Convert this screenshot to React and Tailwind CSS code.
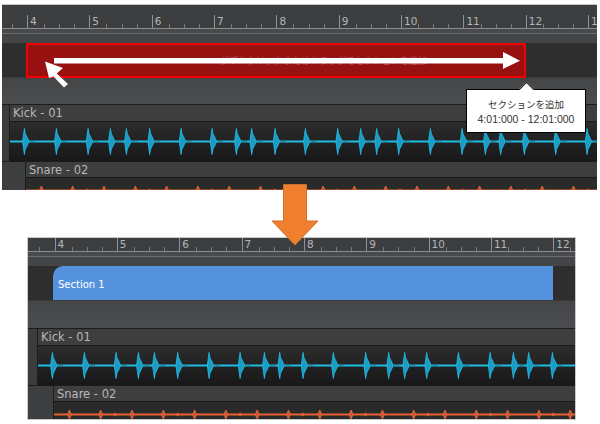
const BARS = [3, 4, 5, 6, 7, 8, 9, 10, 11, 12, 13];
const KICK_HITS = [14.6, 46.6, 78.3, 100.6, 116.6, 139.9, 171.3, 202.3, 226.6, 241.9, 265.3, 295.6, 327.9, 350.9, 366.9, 388.9, 420.6, 452.3, 475.6, 490.9, 514.6, 545.9, 577.3];
const SNARE_HITS = Array.from({ length: 19 }, (_, i) => 15.4 + i * 31.3);
const SNARE_GHOSTS = Array.from({ length: 9 }, (_, i) => 61 + i * 62.6);

function kickPath(x, c) {
  return `M${x - 2} ${c} L${x - 1.2} ${c - 6} L${x - 0.2} ${c - 13} L${x + 0.6} ${c - 8} L${x + 2.8} ${c - 3.5} L${x + 4.4} ${c} L${x + 2.8} ${c + 3.5} L${x + 0.6} ${c + 8} L${x - 0.2} ${c + 13} L${x - 1.2} ${c + 6} Z`;
}

function snarePath(x, c, h) {
  return `M${x - 2} ${c} L${x} ${c - h} L${x + 2} ${c} L${x} ${c + h} Z`;
}

function Ruler({ height, offset, bars }) {
  return (
    <div className={`flex items-end overflow-hidden shrink-0 bg-[#3c3e40] border-b border-[#8a8c8e] ${height}`}>
      <div className={`flex shrink-0 h-[13px] items-end ${offset}`}>
        {bars.map((bar) => (
          <div key={bar} className="flex items-end shrink-0 w-[62.35px] h-full">
            <div className="flex-1 h-full border-l border-[#8f9193] pl-[2px] text-[10.5px] leading-[12px] text-[#b4b6b8] whitespace-nowrap">
              {bar > 3 ? bar : ''}
            </div>
            <div className="flex-1 h-[4px] border-l border-[#77797b]"></div>
            <div className="flex-1 h-[4px] border-l border-[#77797b]"></div>
            <div className="flex-1 h-[4px] border-l border-[#77797b]"></div>
          </div>
        ))}
      </div>
    </div>
  );
}

function KickTrack({ gutter }) {
  const c = 19.5;
  return (
    <div className="flex shrink-0 bg-[#333537] border-t border-[#1c1c1c]">
      <div className={`${gutter} shrink-0 bg-[#3a3c3e] border-r border-[#1c1c1c]`}></div>
      <div className="flex-1 min-w-0">
        <div className="h-[17px] bg-[#3e3e3e] pt-[1px] pl-[3px] text-[11.5px] leading-[15px] text-[#b8b8b8] border-b border-[#1a1a1a]">Kick - 01</div>
        <div className="h-[39px] bg-gradient-to-b from-[#2c2c2c] to-[#181818] overflow-hidden">
          <svg width="600" height="39" className="block">
            <line x1="0" y1={c} x2="600" y2={c} stroke="#20bce4" strokeWidth="1.8" />
            {KICK_HITS.map((x) => (
              <g key={x}>
                <path d={kickPath(x, c)} fill="#1a9cc4" stroke="#25c0ea" strokeWidth="0.8" />
                <path d={`M${x + 4.4} ${c} l1.5 -1 l1.5 1.6 l1.5 -1.2 l1.5 0.8`} fill="none" stroke="#1b6d88" strokeWidth="0.9" />
              </g>
            ))}
          </svg>
        </div>
      </div>
    </div>
  );
}

function SnareTrack({ gutter, waveHeight }) {
  const c = 12.5;
  return (
    <div className="flex flex-1 min-h-0 bg-[#3a3c3e] border-t border-[#1c1c1c]">
      <div className={`${gutter} shrink-0 bg-[#3c3e40] border-r border-[#1c1c1c]`}></div>
      <div className="flex-1 min-w-0 overflow-hidden">
        <div className="h-[16px] bg-[#3e3e3e] pt-[1px] pl-[3px] text-[11.5px] leading-[14px] text-[#b8b8b8] border-b border-[#1a1a1a]">Snare - 02</div>
        <svg width="600" height={waveHeight} className="block bg-[#2a2a2a]">
          <line x1="0" y1={c} x2="600" y2={c} stroke="#e8612e" strokeWidth="1.8" />
          {SNARE_HITS.map((x) => (
            <path key={x} d={snarePath(x, c, 4.5)} fill="#c9573a" stroke="#ee6c3a" strokeWidth="0.8" />
          ))}
          {SNARE_GHOSTS.map((x) => (
            <path key={x} d={snarePath(x, c, 2)} fill="#e8612e" />
          ))}
        </svg>
      </div>
    </div>
  );
}

function Timeline({ className, rulerHeight, rulerOffset, bars, laneGap, kickGutter, snareGutter, snareWave, children }) {
  return (
    <div className={`flex flex-col overflow-hidden font-['DejaVu_Sans',sans-serif] ${className}`}>
      <Ruler height={rulerHeight} offset={rulerOffset} bars={bars} />
      <div className="h-[5px] shrink-0 bg-[#484a4c] border-b border-[#6a6c6e]"></div>
      <div className="h-[9px] shrink-0 bg-[#434547]"></div>
      <div className="h-[35px] shrink-0 bg-[#2e2e2e] border-b border-[#3a3a3a]">{children}</div>
      <div className={`${laneGap} shrink-0 bg-gradient-to-b from-[#434547] to-[#4b4d4f]`}></div>
      <KickTrack gutter={kickGutter} />
      <SnareTrack gutter={snareGutter} waveHeight={snareWave} />
    </div>
  );
}

export default function App() {
  return (
    <div className="relative w-[600px] h-[424px] bg-white overflow-hidden">
      <div className="flex flex-col">
        <Timeline
          className="w-[595px] h-[186px] mt-[4px] ml-[2px] border-t border-[#c8c8c8]"
          rulerHeight="h-[24px]"
          rulerOffset="-ml-[37.35px]"
          bars={BARS}
          laneGap="h-[26px]"
          kickGutter="w-[8px]"
          snareGutter="w-[24px]"
          snareWave={12}
        >
          <div className="flex items-center h-[35px] w-[500px] ml-[24px] bg-[#971111] border-2 border-[#f00000] pl-[192px] text-[9px] text-[#b8504f] whitespace-nowrap font-['Noto_Sans_CJK_JP',sans-serif]">
            ダブルクリックまたはドラッグでセクションを追加
          </div>
        </Timeline>
        <Timeline
          className="w-[547px] h-[181px] mt-[48px] ml-[28px] ring-1 ring-[#c8c8c8]"
          rulerHeight="h-[14px]"
          rulerOffset="-ml-[35.85px]"
          bars={BARS.slice(0, 10)}
          laneGap="h-[27px]"
          kickGutter="w-[10px]"
          snareGutter="w-[26px]"
          snareWave={17}
        >
          <div className="flex items-center h-[34px] w-[500px] ml-[25px] bg-[#5592de] rounded-tl-[10px] pt-[2px] pl-[5px] text-[10px] text-white">
            Section 1
          </div>
        </Timeline>
      </div>

      <svg width="600" height="424" className="absolute left-0 top-0 pointer-events-none">
        <path d="M54 58 H503 V52 L520 60.7 L503 69 V63.4 H54 Z" fill="#ffffff" />
        <path d="M45 61.5 L63 68 L56.7 73.6 L68 84 L64 87.5 L53.5 76.5 L49 78 Z" fill="#ffffff" />
        <path d="M283.5 184.5 H306.5 V221 H318 L295 245 L272 221 H283.5 Z" fill="#f0802e" stroke="#c9702c" strokeWidth="1" />
      </svg>

      <div className="absolute left-[466px] top-[89px] w-[120px] h-[44px] flex flex-col items-center justify-center pt-[2px] bg-white border border-black text-[#333333] font-['Liberation_Sans','Noto_Sans_CJK_JP',sans-serif]">
        <div className="absolute -top-[6.5px] left-[54px] w-[11px] h-[11px] rotate-45 bg-white border-l border-t border-[#222222]"></div>
        <div className="text-[9.5px] leading-[15px] font-['Noto_Sans_CJK_JP',sans-serif]">セクションを追加</div>
        <div className="text-[10.5px] leading-[15px] whitespace-nowrap">4:01:000 - 12:01:000</div>
      </div>
    </div>
  );
}
